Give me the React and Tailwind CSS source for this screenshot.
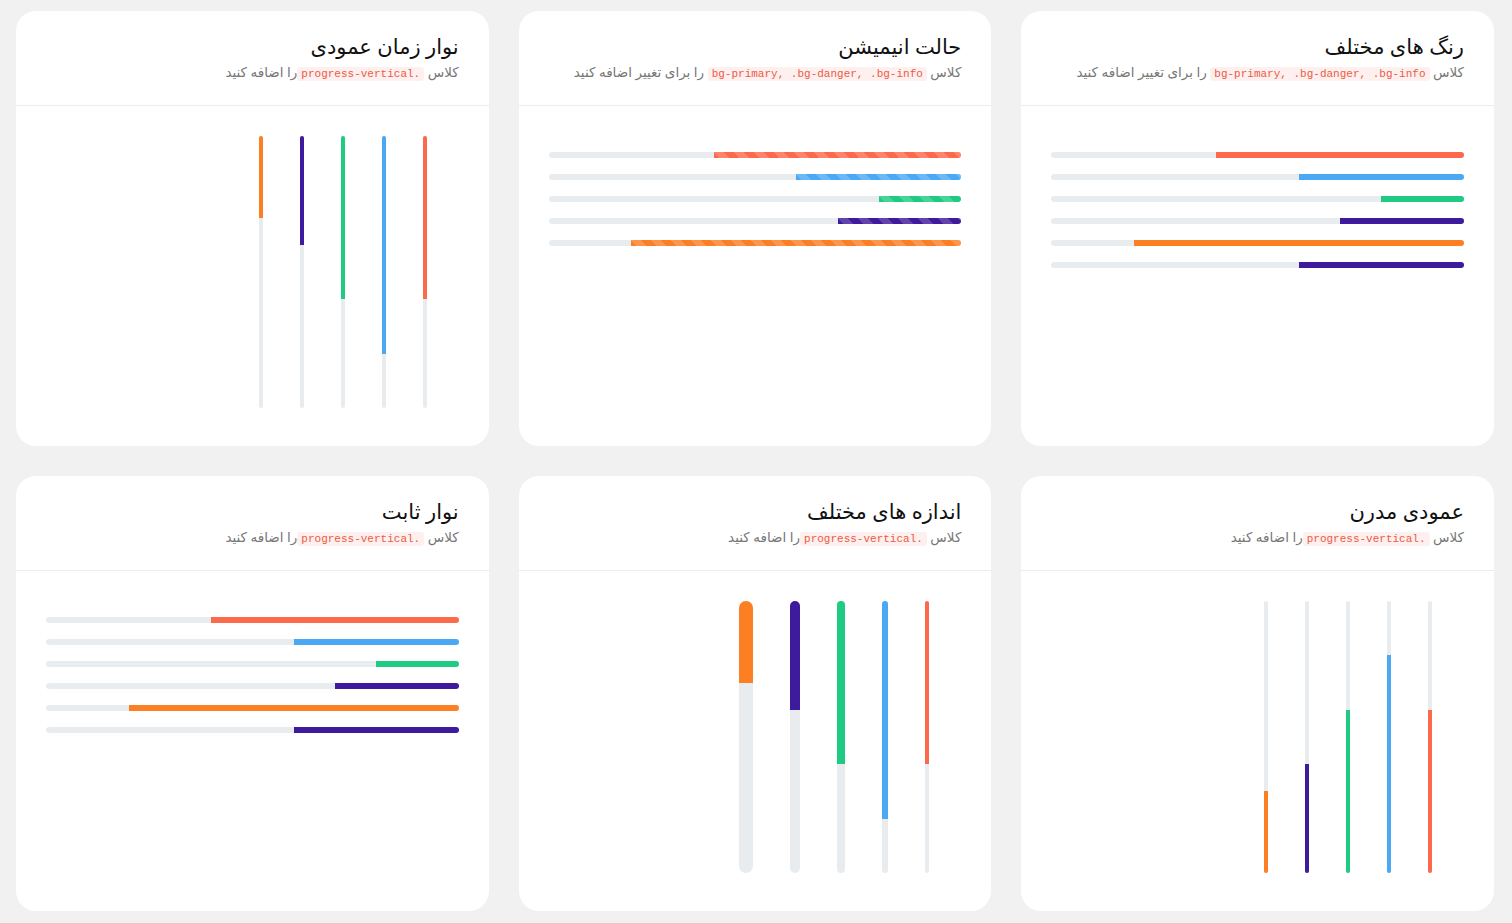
import React from "react";

const colors = {
  red: "bg-[#fd6a4b]",
  blue: "bg-[#4aa8f5]",
  green: "bg-[#1fcb83]",
  purple: "bg-[#3e1a9c]",
  orange: "bg-[#fd7f23]",
};

const hBars = [
  { c: colors.red, v: 60 },
  { c: colors.blue, v: 40 },
  { c: colors.green, v: 20 },
  { c: colors.purple, v: 30 },
  { c: colors.orange, v: 80 },
  { c: colors.purple, v: 40 },
];

// order from right to left
const vBars = [
  { c: colors.red, v: 60 },
  { c: colors.blue, v: 80 },
  { c: colors.green, v: 60 },
  { c: colors.purple, v: 40 },
  { c: colors.orange, v: 30 },
];

const sizes = ["w-[4px]", "w-[6px]", "w-[8px]", "w-[10px]", "w-[14px]"];

const stripe =
  "bg-[linear-gradient(45deg,rgba(255,255,255,.18)_25%,transparent_25%,transparent_50%,rgba(255,255,255,.18)_50%,rgba(255,255,255,.18)_75%,transparent_75%,transparent)] bg-[length:20px_20px]";

const Code = ({ children }) => (
  <code className="bg-[#fdf0ee] text-[#ee5a45] px-[4px] py-[1px] rounded-[3px] text-[11px] font-['Liberation_Mono',monospace]">
    {children}
  </code>
);

const Card = ({ title, sub, children }) => (
  <div className="bg-white rounded-[20px] h-[435px] flex flex-col">
    <div className="px-[30px] pt-[22px] h-[95px] border-b border-[#ececec]">
      <h3 className="text-[21px] leading-[26px] text-[#111]">{title}</h3>
      <p className="text-[13.5px] leading-[20px] mt-[3px] text-[#777]">{sub}</p>
    </div>
    {children}
  </div>
);

const HorizontalBars = ({ striped, count = 6 }) => (
  <div className="px-[30px] pt-[46px] flex flex-col gap-[16px]">
    {hBars.slice(0, count).map((b, i) => (
      <div key={i} className="h-[6px] rounded-full bg-[#e9ecef] overflow-hidden flex">
        <div className={`h-full ${b.c} ${striped ? stripe : ""}`} style={{ width: `${b.v}%` }} />
      </div>
    ))}
  </div>
);

const VerticalBars = ({ fromBottom, sized }) => (
  <div className="pt-[30px] pr-[62px] pl-[30px] flex gap-[37px]">
    {vBars.map((b, i) => (
      <div
        key={i}
        className={`h-[272px] ${sized ? sizes[i] : "w-[4px]"} rounded-full bg-[#e9ecef] overflow-hidden flex flex-col ${
          fromBottom ? "justify-end" : ""
        }`}
      >
        <div className={`w-full ${b.c}`} style={{ height: `${b.v}%` }} />
      </div>
    ))}
  </div>
);

const subColors = (
  <>
    کلاس <Code>bg-primary, .bg-danger, .bg-info</Code> را برای تغییر اضافه کنید
  </>
);

const subVertical = (
  <>
    کلاس <Code>{" .progress-vertical"}</Code>را اضافه کنید
  </>
);

const subVertical2 = (
  <>
    کلاس <Code>.progress-vertical</Code>را اضافه کنید
  </>
);

export default function App() {
  return (
    <div
      dir="rtl"
      className="min-h-screen bg-[#f1f1f1] pl-[16px] pr-[18px] pt-[11px] pb-[12px] font-['Noto_Sans','DejaVu_Sans',sans-serif]"
    >
      <div className="grid grid-cols-3 gap-[30px]">
        <Card title="رنگ های مختلف" sub={subColors}>
          <HorizontalBars />
        </Card>
        <Card title="حالت انیمیشن" sub={subColors}>
          <HorizontalBars striped count={5} />
        </Card>
        <Card title="نوار زمان عمودی" sub={subVertical}>
          <VerticalBars />
        </Card>
        <Card title="عمودی مدرن" sub={subVertical2}>
          <VerticalBars fromBottom />
        </Card>
        <Card title="اندازه های مختلف" sub={subVertical}>
          <VerticalBars sized />
        </Card>
        <Card title="نوار ثابت" sub={subVertical2}>
          <HorizontalBars />
        </Card>
      </div>
    </div>
  );
}
